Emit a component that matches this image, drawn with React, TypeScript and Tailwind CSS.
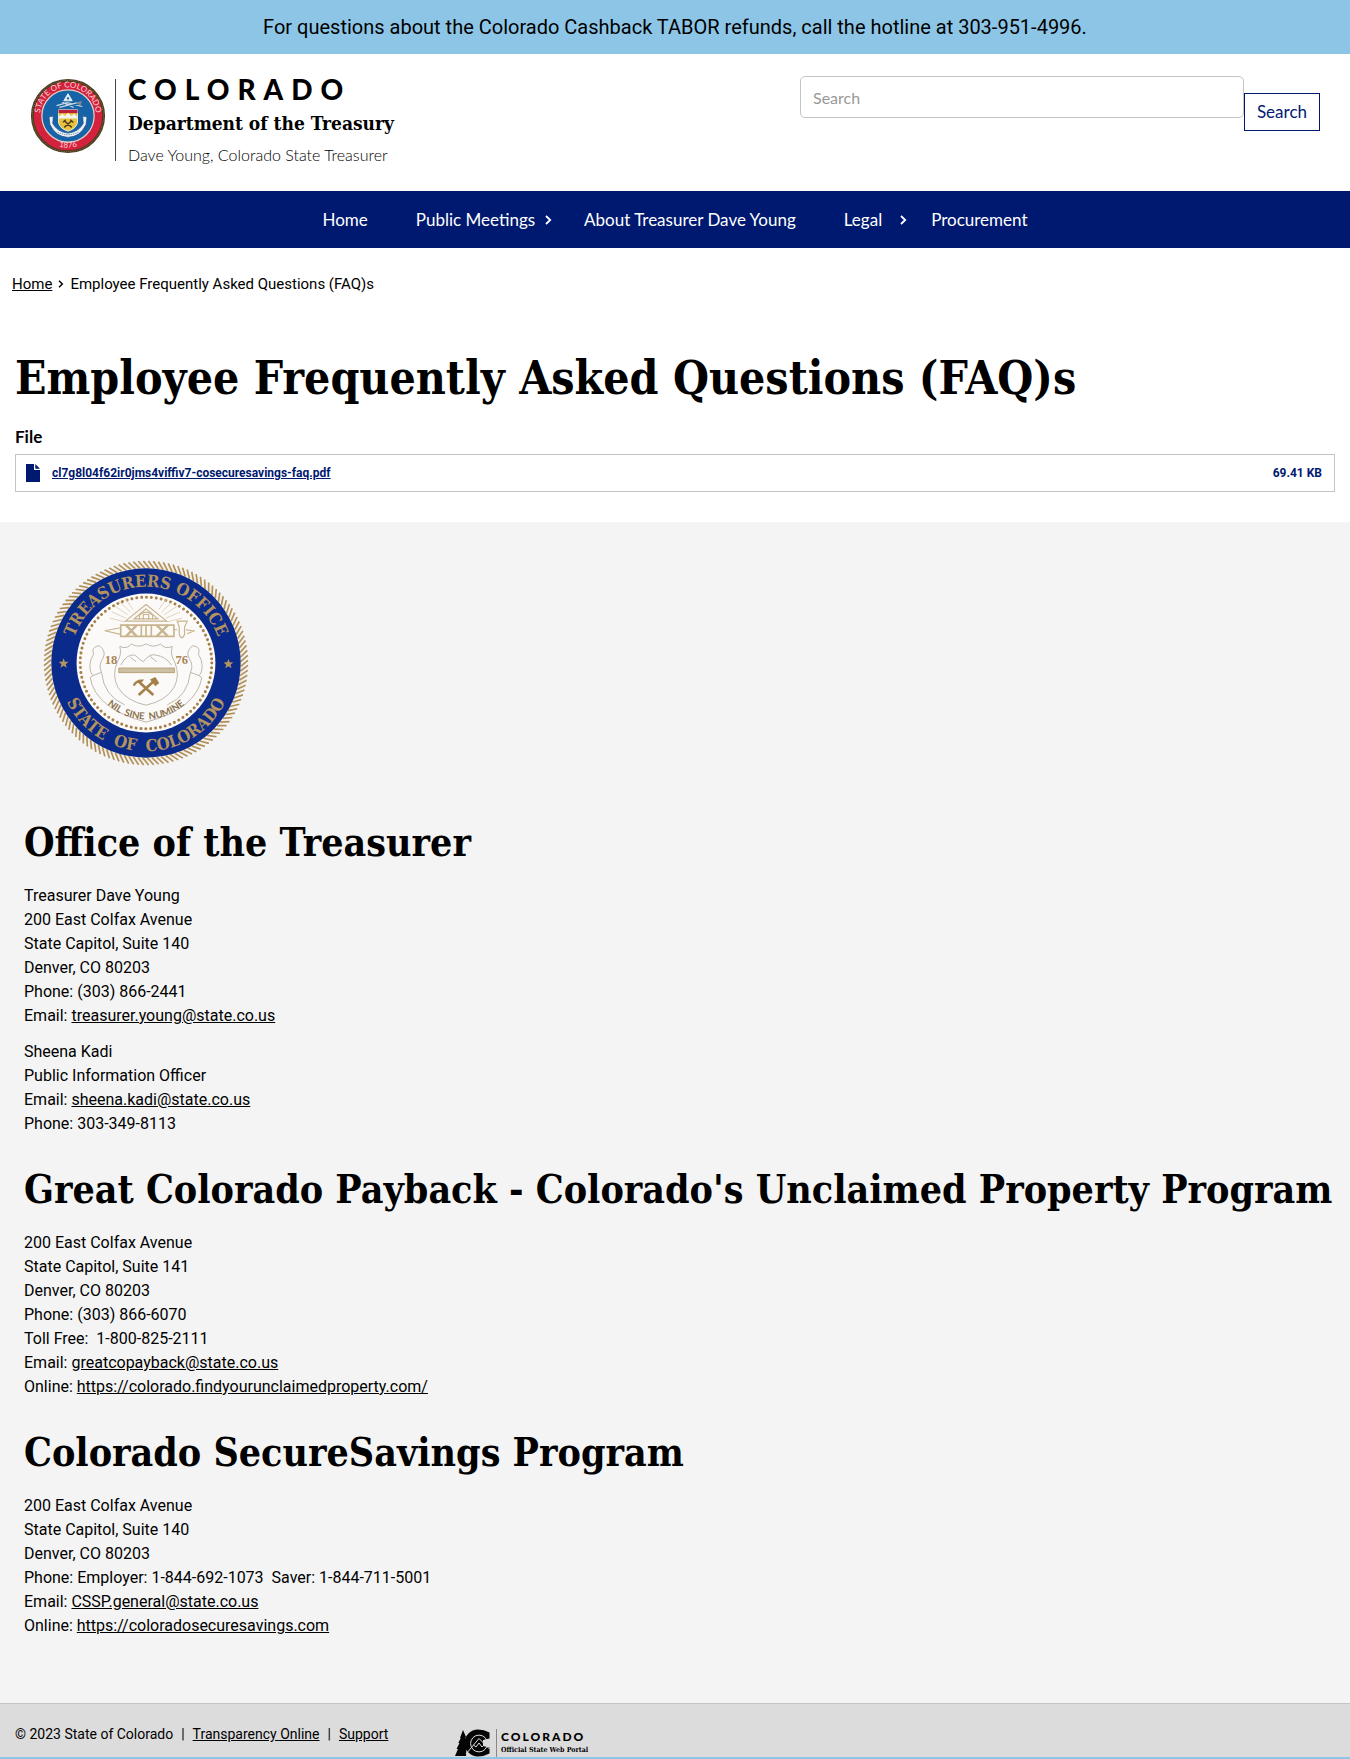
import type { ReactNode } from "react";

const GOLD = "#b3935f";
const NAVY = "#0a2a8c";

function StateSeal() {
  return (
    <svg viewBox="0 0 80 80" className="size-[76px] shrink-0" role="img" aria-label="State of Colorado seal">
      <defs>
        <path id="sealTop" d="M11.5 47 A29.5 29.5 0 1 1 68.5 47" />
        <path id="sealBottom" d="M20 67 A34.5 34.5 0 0 0 60 67" />
      </defs>
      <circle cx="40" cy="40" r="37.5" fill="#d4213d" stroke="#4b3a22" strokeWidth="3" />
      <circle cx="40" cy="40" r="37.5" fill="none" stroke="#9a7a3a" strokeWidth="1" strokeDasharray="1 1.4" />
      <circle cx="40" cy="40" r="27.5" fill="#1663a8" stroke="#e3d3c4" strokeWidth="1.3" />
      <g fill="#fbd3d6" fontFamily="Lato, sans-serif" fontSize="8.5">
        <text textAnchor="middle">
          <textPath href="#sealTop" startOffset="50%">STATE OF COLORADO</textPath>
        </text>
        <text textAnchor="middle">
          <textPath href="#sealBottom" startOffset="50%">1876</textPath>
        </text>
      </g>
      <path d="M40 16.5 L44.5 24 H35.5 Z" fill="#d9e8f4" stroke="#fff" strokeWidth="0.8" />
      <circle cx="40" cy="21.5" r="1.2" fill="#27558b" />
      <path d="M28 29 L39 26 L55 30 M31 31 L50 26 M34 25.5 L46 31" stroke="#cfd8df" strokeWidth="1.3" fill="none" />
      <path d="M48 26 L55 24 L53 29 Z" fill="#7b8794" />
      <path d="M30 33.5 H50 V47 Q49 53 40 56 Q31 53 30 47 Z" fill="#e9c33c" stroke="#fff" strokeWidth="0.8" />
      <path d="M30 33.5 H50 V37 H30 Z" fill="#b91f3a" />
      <path d="M30 41 L34 37.5 L37 40 L40 36.5 L43.5 40 L46.5 37.5 L50 41 V42.5 H30 Z" fill="#f2f2f2" />
      <path d="M36 45 L44 52 M44 45 L36 52 M34.8 46.5 L37.6 44 M42.5 44 L45.6 46.8" stroke="#4a3b20" strokeWidth="1.5" />
      <path d="M20 41 L24.5 40 L24 48 Q29 57 40 58 Q51 57 56 48 L55.5 40 L60 41 L59 49 Q53 62 40 62.5 Q27 62 21 49 Z" fill="#eef2f7" stroke="#27558b" strokeWidth="0.8" />
      <path d="M29 57 Q40 62.5 51 57" stroke="#5b7fa8" strokeWidth="1" strokeDasharray="1.4 1" fill="none" />
    </svg>
  );
}

const STAR = "M0 -15 L4 -5 L15 -4.5 L6.5 2.5 L9.5 13 L0 7 L-9.5 13 L-6.5 2.5 L-15 -4.5 L-4 -5 Z";

function TreasurerSeal() {
  const ticks = Array.from({ length: 128 }, (_, i) => (i * 360) / 128);
  const rays = [-76, -66, -56, -46, -36, 36, 46, 56, 66, 76];
  return (
    <svg viewBox="68 60 624 620" className="block h-[206px] w-[208px]" role="img" aria-label="Treasurer's Office, State of Colorado">
      <defs>
        <path id="officeTop" d="M155 418 A230 230 0 1 1 605 418" />
        <path id="officeBottom" d="M117 330 A266 266 0 1 0 643 330" />
        <path id="motto" d="M236 462 A172 172 0 0 0 524 462" />
      </defs>
      <circle cx="380" cy="370" r="296" fill="#f4efe6" />
      <g stroke="#b08f58" strokeWidth="5">
        {ticks.map((a) => (
          <line key={a} x1="372" y1="63" x2="390" y2="85" transform={`rotate(${a} 380 370)`} />
        ))}
      </g>
      <circle cx="380" cy="370" r="285" fill={NAVY} />
      <circle cx="380" cy="370" r="209" fill="#fbfaf8" />
      <circle cx="380" cy="370" r="198" fill="none" stroke="#a5804a" strokeWidth="9" strokeLinecap="round" strokeDasharray="0.1 14.71" />
      <g fill={GOLD} fontFamily="'DejaVu Serif Condensed', 'DejaVu Serif', serif" fontWeight="700" fontSize="50">
        <text textAnchor="middle">
          <textPath href="#officeTop" startOffset="50%">TREASURERS OFFICE</textPath>
        </text>
        <text textAnchor="middle">
          <textPath href="#officeBottom" startOffset="50%">STATE&#160; OF&#160; COLORADO</textPath>
        </text>
      </g>
      <path d={STAR} transform="translate(132 371)" fill={GOLD} />
      <path d={STAR} transform="translate(628 373)" fill={GOLD} />
      <g stroke="#ddd0b8" strokeWidth="2.5">
        {rays.map((a) => (
          <line key={a} x1="380" y1="196" x2="380" y2="150" transform={`rotate(${a} 380 262)`} />
        ))}
      </g>
      <g fill="none" stroke="#c8b48d" strokeWidth="3.5">
        <path d="M380 194 L442 244 H318 Z" />
        <path d="M380 207 L416 237 H344 Z" />
        <path d="M360 238 V226 Q380 208 400 226 V238 M372 238 V224 H388 V238" />
        <path d="M304 256 H464 V290 H304 Z" strokeWidth="5" />
        <path d="M320 256 L352 290 M352 256 L320 290 M412 256 L446 290 M446 256 L412 290" strokeWidth="7" />
        <path d="M366 256 V290 M380 256 V290 M396 256 V290" strokeWidth="5" />
        <path d="M304 264 L256 273 L304 284 M464 270 H474 M500 270 L524 274 L504 282" />
        <path d="M474 244 H504 L496 262 V284 Q488 304 480 284 V262 Z" />
      </g>
      <g fill="none" stroke="#bdb8ad" strokeWidth="3">
        <path d="M301 320 Q322 330 336 313 Q360 326 380 312 Q400 326 424 313 Q438 330 459 320 Q452 344 466 366 Q484 408 464 444 Q440 484 380 497 Q320 484 296 444 Q276 408 294 366 Q308 344 301 320 Z" />
        <path d="M240 318 Q214 320 222 344 L214 360 Q206 392 220 408 L212 414 Q228 508 380 548 Q532 508 548 414 L540 408 Q554 392 546 360 L538 344 Q546 320 520 318" />
        <path d="M220 408 L246 398 Q254 470 316 496 M540 408 L514 398 Q506 470 444 496 M240 318 Q262 336 250 356 Q236 378 246 398 M520 318 Q498 336 510 356 Q524 378 514 398" />
        <path d="M304 376 Q322 342 346 346 Q360 360 372 366 Q392 340 408 346 Q440 350 456 376 M332 352 L350 366 M392 350 L412 366" />
      </g>
      <path d="M298 385 H466 V399 H298 Z" fill="#cdbfa2" stroke="#ac8c57" strokeWidth="2" />
      <path d="M356 424 L402 466 M404 424 L358 466" stroke="#a5804a" strokeWidth="8" />
      <path d="M340 436 Q350 416 374 420 L368 428 Q352 426 346 440 Z M392 420 L408 412 L420 430 L408 440 Z" fill="#a5804a" />
      <g fill="#a98656" fontFamily="'Liberation Serif', serif" fontWeight="700" fontSize="38">
        <text x="256" y="374">18</text>
        <text x="469" y="374">76</text>
      </g>
      <text textAnchor="middle" fill="#8d7350" fontFamily="Lato, sans-serif" fontWeight="700" fontSize="29">
        <textPath href="#motto" startOffset="50%">NIL&#160; SINE&#160; NUMINE</textPath>
      </text>
    </svg>
  );
}

function PortalMark() {
  return (
    <svg viewBox="0 0 36 28" className="h-7 w-9 shrink-0" aria-hidden="true">
      <path d="M0 27 L3 20 L1.5 20 L4.5 14 L3.3 14 L5.8 9 L5 9 L8 1 L11 8 L10 9 L12 13 L11 27 Z" fill="#050505" />
      <path d="M34.5 3.5 Q29 0.5 23 0.5 A13.5 13.5 0 1 0 23 27.5 Q29 27.5 34.5 24.5 V18.5 L28 17 V11 L34.5 9.5 Z" fill="#050505" />
      <g fill="none" stroke="#dcdcdc" strokeWidth="1">
        <circle cx="24" cy="14.5" r="8.4" />
        <path d="M11 25 L24 9.5 L34.5 20 M18.5 16 L21 18 L24 14 L27 18 L29 16" />
      </g>
    </svg>
  );
}

function Chevron({ className }: { className: string }) {
  return (
    <svg viewBox="0 0 7 10" className={className} fill="none" stroke="currentColor" strokeWidth="1.8" aria-hidden="true">
      <path d="M1 1 L5.2 5 L1 9" />
    </svg>
  );
}

function TextLink({ href, children }: { href: string; children: ReactNode }) {
  return (
    <a href={href} className="underline">
      {children}
    </a>
  );
}

function SectionTitle({ children }: { children: ReactNode }) {
  return (
    <h2 className="font-['DejaVu_Serif_Condensed','DejaVu_Serif',serif] text-[39px] leading-[46px] font-bold">{children}</h2>
  );
}

export default function App() {
  return (
    <div className="bg-white font-[Roboto,sans-serif] text-base leading-6 text-black">
      <div className="bg-[#8dc5e6] px-4 py-3 text-center text-xl leading-[30px]">
        For questions about the Colorado Cashback TABOR refunds, call the hotline at 303-951-4996.
      </div>

      <header className="flex h-[137px] items-start justify-between px-[30px] pt-[22px]">
        <a href="#home" className="flex items-start">
          <span className="pt-0.5">
            <StateSeal />
          </span>
          <span className="mt-[3px] ml-[9px] flex h-[82px] border-l border-[#444] pl-3">
            <span className="flex flex-col whitespace-nowrap">
              <span className="font-[Lato,sans-serif] text-[28px] leading-5 font-black tracking-[8px]">COLORADO</span>
              <span className="mt-3 font-['DejaVu_Serif_Condensed','DejaVu_Serif',serif] text-[19px] leading-6 font-bold">
                Department of the Treasury
              </span>
              <span className="mt-2 font-[Lato,sans-serif] text-base leading-6 font-light">
                Dave Young, Colorado State Treasurer
              </span>
            </span>
          </span>
        </a>
        <form className="flex w-[520px] items-start font-[Lato,sans-serif]" onSubmit={(e) => e.preventDefault()}>
          <input
            type="search"
            aria-label="Search"
            placeholder="Search"
            className="h-[42px] min-w-0 flex-1 rounded-[5px] border border-[#c4c4c4] px-3 text-base placeholder:text-[#999]"
          />
          <button type="submit" className="mt-[17px] h-[38px] border border-[#001970] px-3 text-[17px] leading-6 text-[#001970]">
            Search
          </button>
        </form>
      </header>

      <nav className="flex h-[57px] items-center justify-center bg-[#001970] font-[Lato,sans-serif] text-[17px] text-white">
        <a href="#home" className="px-6">Home</a>
        <a href="#meetings" className="flex items-center gap-2.5 pr-2 pl-6">
          Public Meetings
          <Chevron className="h-2.5 w-[7px]" />
        </a>
        <a href="#about" className="px-6">About Treasurer Dave Young</a>
        <a href="#legal" className="flex items-center gap-[18px] pl-6">
          Legal
          <Chevron className="h-2.5 w-[7px]" />
        </a>
        <a href="#procurement" className="px-6">Procurement</a>
      </nav>

      <nav aria-label="Breadcrumb" className="flex items-center px-3 pt-6 text-[15px]">
        <TextLink href="#home">Home</TextLink>
        <Chevron className="mx-1.5 h-2 w-1.5" />
        <span>Employee Frequently Asked Questions (FAQ)s</span>
      </nav>

      <main className="px-[15px] pt-[50px] pb-[30px]">
        <h1 className="font-['DejaVu_Serif_Condensed','DejaVu_Serif',serif] text-[46px] leading-[64px] font-bold">
          Employee Frequently Asked Questions (FAQ)s
        </h1>
        <h3 className="mt-[15px] mb-[5px] font-[Lato,sans-serif] text-[17px] leading-6 font-bold">File</h3>
        <div className="flex h-[38px] items-center border border-[#c4c4c4] pr-3 pl-2.5 text-xs font-bold text-[#001970]">
          <svg viewBox="0 0 14 18" className="mr-3 h-[18px] w-3.5" fill="#001970" aria-hidden="true">
            <path d="M0 0 H8 V6 H14 V18 H0 Z M9.3 0 L14 4.8 H9.3 Z" />
          </svg>
          <a href="#file" className="underline">cl7g8l04f62ir0jms4viffiv7-cosecuresavings-faq.pdf</a>
          <span className="ml-auto">69.41 KB</span>
        </div>
      </main>

      <section className="bg-[#f4f4f4] pt-[38px] pr-3 pb-[65px] pl-6">
        <div className="ml-[18px]">
          <TreasurerSeal />
        </div>

        <div className="mt-[53px]">
          <SectionTitle>Office of the Treasurer</SectionTitle>
          <p className="mt-[19px]">
            Treasurer Dave Young<br />
            200 East Colfax Avenue<br />
            State Capitol, Suite 140<br />
            Denver, CO 80203<br />
            Phone: (303) 866-2441<br />
            Email: <TextLink href="mailto:treasurer.young@state.co.us">treasurer.young@state.co.us</TextLink>
          </p>
          <p className="mt-3">
            Sheena Kadi<br />
            Public Information Officer<br />
            Email: <TextLink href="mailto:sheena.kadi@state.co.us">sheena.kadi@state.co.us</TextLink><br />
            Phone: 303-349-8113
          </p>
        </div>

        <div className="mt-[30px]">
          <SectionTitle>Great Colorado Payback - Colorado's Unclaimed Property Program</SectionTitle>
          <p className="mt-[19px]">
            200 East Colfax Avenue<br />
            State Capitol, Suite 141<br />
            Denver, CO 80203<br />
            Phone: (303) 866-6070<br />
            Toll Free: &nbsp;1-800-825-2111<br />
            Email: <TextLink href="mailto:greatcopayback@state.co.us">greatcopayback@state.co.us</TextLink><br />
            Online: <TextLink href="#payback">https://colorado.findyourunclaimedproperty.com/</TextLink>
          </p>
        </div>

        <div className="mt-[30px]">
          <SectionTitle>Colorado SecureSavings Program</SectionTitle>
          <p className="mt-[19px]">
            200 East Colfax Avenue<br />
            State Capitol, Suite 140<br />
            Denver, CO 80203<br />
            Phone: Employer: 1-844-692-1073 &nbsp;Saver: 1-844-711-5001<br />
            Email: <TextLink href="mailto:CSSP.general@state.co.us">CSSP.general@state.co.us</TextLink><br />
            Online: <TextLink href="#securesavings">https://coloradosecuresavings.com</TextLink>
          </p>
        </div>
      </section>

      <footer className="grid h-14 grid-cols-[440px_1fr] overflow-hidden border-t border-b-2 border-t-[#c4c4c4] border-b-[#8dc5e6] bg-[#dcdcdc] px-[15px] text-sm">
        <p className="flex pt-[18px] leading-6">
          © 2023 State of Colorado
          <span className="mx-2">|</span>
          <TextLink href="#transparency">Transparency Online</TextLink>
          <span className="mx-2">|</span>
          <TextLink href="#support">Support</TextLink>
        </p>
        <a href="#portal" className="flex pt-[25px]">
          <PortalMark />
          <span className="ml-[5px] flex h-7 flex-col border-l border-[#888] pl-1">
            <span className="mt-0.5 font-[Lato,sans-serif] text-xs leading-3 font-black tracking-[2px]">COLORADO</span>
            <span className="mt-0.5 font-['DejaVu_Serif_Condensed','DejaVu_Serif',serif] text-[7px] leading-2.5 font-bold">
              Official State Web Portal
            </span>
          </span>
        </a>
      </footer>
    </div>
  );
}
